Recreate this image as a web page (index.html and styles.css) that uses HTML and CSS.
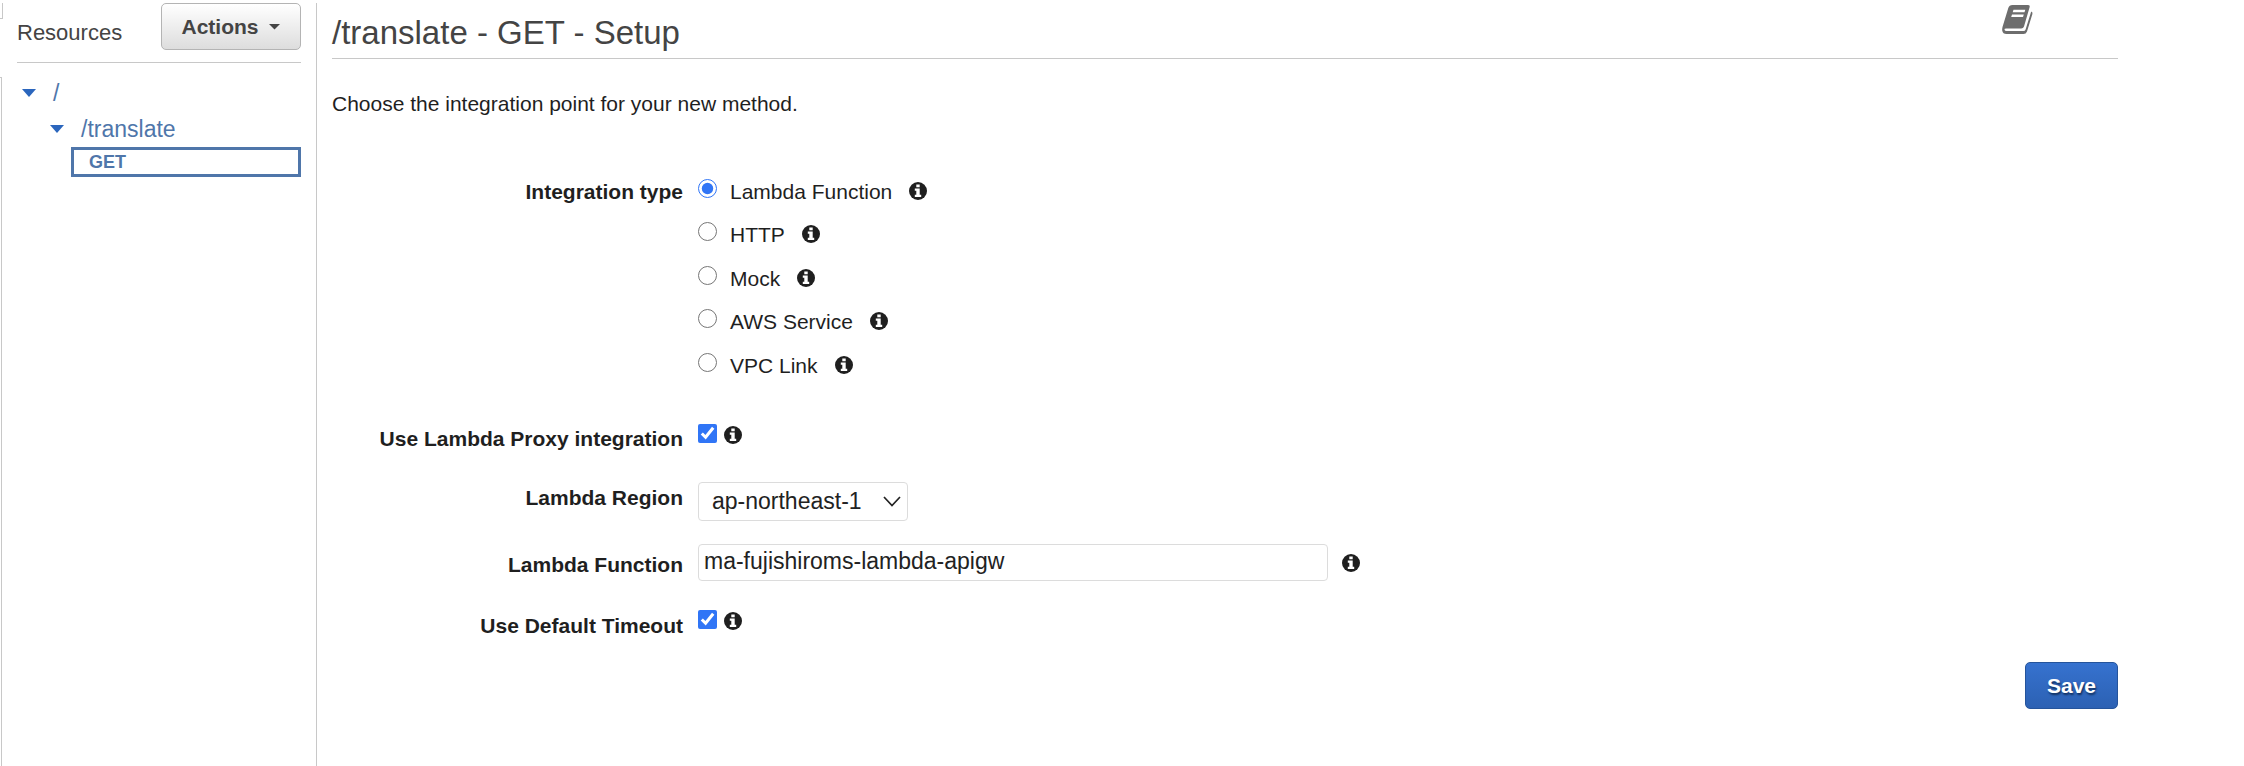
FILE: index.html
```html
<!DOCTYPE html>
<html lang="en">
<head>
<meta charset="utf-8">
<title>/translate - GET - Setup</title>
<link rel="stylesheet" href="styles.css">
</head>
<body>
<svg class="defs" aria-hidden="true">
  <symbol id="info" viewBox="0 0 18 18">
    <circle cx="9" cy="9" r="9" fill="#1f1f1f"/>
    <path fill="#fff" d="M7.3 2.5h3.400v2.800H7.300zM5.800 6.600h4.900v6.100h1.500v2.200H5.800v-2.200h1.500V8.800H5.800z"/>
  </symbol>
</svg>
<div class="app">
  <div class="rail"><div class="rail-top"></div><div class="rail-line"></div></div>
  <aside class="sidebar">
    <header class="sidebar-head">
      <h2>Resources</h2>
      <button class="btn-actions" type="button">Actions <span class="caret"></span></button>
    </header>
    <nav class="tree">
      <div class="node"><span class="caret"></span><a href="#root">/</a></div>
      <div class="node child"><span class="caret"></span><a href="#translate">/translate</a></div>
      <a class="method" href="#get">GET</a>
    </nav>
  </aside>
  <main class="main">
    <header class="main-head">
      <h1>/translate - GET - Setup</h1>
      <a class="docs" href="#docs" aria-label="Documentation">
        <svg width="32" height="30" viewBox="0 0 32 30">
          <path fill="#6d6d6d" fill-rule="evenodd" d="M10.5 0H26q2.200 0 1.600 2.200L22 21.500q-.6 2-2.800 2H4.200q-2 0-1.700 1.300.3 1.300 2 1.300H21.500q1.600 0 2.100-1.500L29.200 6.500q1.800.5 1.200 2.500L25 26.500Q24 29 21.500 29H4.500Q.8 29 .2 25.500 0 24 .5 22L6.300 3Q7.200 0 10.500 0zM11.500 4.800l-.8 2.400h11.800l.8-2.400zM10 9.500l-.8 2.400H21l.8-2.400z"/>
        </svg>
      </a>
    </header>
    <p class="intro">Choose the integration point for your new method.</p>
    <form class="form">
      <div class="row types" role="radiogroup" aria-labelledby="type-label">
        <span class="label" id="type-label">Integration type</span>
        <div class="options">
          <div class="option"><input type="radio" name="type" id="t1" checked><label for="t1">Lambda Function</label><svg class="info"><use href="#info"/></svg></div>
          <div class="option"><input type="radio" name="type" id="t2"><label for="t2">HTTP</label><svg class="info"><use href="#info"/></svg></div>
          <div class="option"><input type="radio" name="type" id="t3"><label for="t3">Mock</label><svg class="info"><use href="#info"/></svg></div>
          <div class="option"><input type="radio" name="type" id="t4"><label for="t4">AWS Service</label><svg class="info"><use href="#info"/></svg></div>
          <div class="option"><input type="radio" name="type" id="t5"><label for="t5">VPC Link</label><svg class="info"><use href="#info"/></svg></div>
        </div>
      </div>
      <div class="row proxy">
        <label class="label" for="proxy">Use Lambda Proxy integration</label>
        <div class="check"><input type="checkbox" id="proxy" checked><svg class="info"><use href="#info"/></svg></div>
      </div>
      <div class="row region">
        <label class="label" for="region">Lambda Region</label>
        <div class="select">
          <select id="region"><option>ap-northeast-1</option></select>
          <svg class="chevron" width="18" height="11" viewBox="0 0 18 11"><path d="M1 1l8 8.500L17 1" fill="none" stroke="#222" stroke-width="1.700"/></svg>
        </div>
      </div>
      <div class="row function">
        <label class="label" for="function">Lambda Function</label>
        <div class="field"><input type="text" id="function" value="ma-fujishiroms-lambda-apigw"><svg class="info"><use href="#info"/></svg></div>
      </div>
      <div class="row timeout">
        <label class="label" for="timeout">Use Default Timeout</label>
        <div class="check"><input type="checkbox" id="timeout" checked><svg class="info"><use href="#info"/></svg></div>
      </div>
      <div class="actions"><button class="btn-save" type="submit">Save</button></div>
    </form>
  </main>
</div>
</body>
</html>
```
FILE: styles.css
```css
* { box-sizing: border-box; }
body {
  margin: 0;
  background: #fff;
  color: #1f1f1f;
  font: 21px/24px "Liberation Sans", Arial, sans-serif;
}
h1, h2, p { margin: 0; font-weight: normal; }
a { text-decoration: none; }
input { margin: 0; accent-color: #3075f6; }
.defs { position: absolute; width: 0; height: 0; }
.app { display: flex; min-height: 100vh; padding-top: 3px; }

.rail { display: flex; flex-direction: column; gap: 58px; width: 3px; }
.rail-top { height: 16px; border-bottom: 1px solid #c8c8c8; }
.rail-top::before { content: ""; display: block; width: 2px; height: 100%; border-right: 1px solid #c8c8c8; }
.rail-line { flex: 1; width: 2px; border-right: 1px solid #c8c8c8; border-top: 1px solid #c8c8c8; }

.sidebar { width: 314px; padding: 0 15px 0 14px; border-right: 1px solid #c8c8c8; }
.sidebar-head {
  display: flex;
  align-items: flex-start;
  justify-content: space-between;
  height: 60px;
  border-bottom: 1px solid #c8c8c8;
}
h2 { padding-top: 18px; font-size: 22px; color: #444; }
.caret {
  width: 14px;
  height: 8px;
  background: #2b66bd;
  clip-path: polygon(0 0, 100% 0, 50% 100%);
}
.btn-actions {
  display: flex;
  align-items: center;
  justify-content: center;
  gap: 10px;
  width: 140px;
  height: 47px;
  border: 1px solid #b4b4b4;
  border-radius: 5px;
  background: linear-gradient(#fff, #ddd);
  color: #444;
  font: bold 21px/24px "Liberation Sans", Arial, sans-serif;
}
.btn-actions .caret { width: 12px; height: 6px; background: #444; }

.tree { padding-top: 12px; }
.node { display: flex; align-items: center; gap: 17px; height: 36px; padding-left: 5px; font-size: 23px; }
.node.child { padding-left: 33px; }
.node a { color: #4f76aa; }
.method {
  display: block;
  height: 30px;
  margin-left: 54px;
  padding-left: 15px;
  border: 3px solid #4f76aa;
  color: #4f76aa;
  font-size: 18px;
  line-height: 25px;
  font-weight: bold;
}

.main { flex: 1; margin-left: 15px; margin-right: 126px; }
.main-head {
  display: flex;
  justify-content: space-between;
  height: 56px;
  padding-right: 84px;
  border-bottom: 1px solid #c8c8c8;
}
h1 { padding-top: 11px; font-size: 33px; line-height: 38px; color: #444; }
.docs { padding-top: 2px; }
.docs svg { display: block; }
.intro { padding-top: 33px; }

.form { display: flex; flex-direction: column; padding-top: 60px; }
.row { display: flex; align-items: flex-start; gap: 15px; }
.label { width: 351px; padding-top: 4px; text-align: right; font-weight: bold; }
.options { display: flex; flex-direction: column; height: 217px; }
.option { display: flex; flex: 1; align-items: flex-start; }
.option input { width: 19px; height: 19px; margin-top: 3px; }
.option label { padding: 4px 17px 0 13px; }
.info { width: 18px; height: 18px; flex: none; }
.option .info { margin-top: 6px; }

.check { display: flex; align-items: flex-start; gap: 7px; }
.check input { width: 19px; height: 19px; }
.check .info { margin-top: 2px; }
.proxy { margin-top: 31px; }
.proxy .label { padding-top: 3px; }
.region { margin-top: 31px; }
.select { display: grid; align-items: center; width: 210px; }
.select select, .chevron { grid-area: 1 / 1; }
.chevron { justify-self: end; margin-right: 7px; pointer-events: none; }
select, input[type="text"] {
  border: 1px solid #dcdcdc;
  border-radius: 4px;
  background: #fff;
  color: #222;
  font: 23px/28px "Liberation Sans", Arial, sans-serif;
}
select { appearance: none; height: 39px; padding: 0 13px 2px; }
.function { margin-top: 23px; }
.function .label { padding-top: 9px; }
.field { display: flex; align-items: center; gap: 14px; }
input[type="text"] { width: 630px; height: 37px; padding: 0 5px 2px; }
.timeout { margin-top: 29px; }
.actions { display: flex; justify-content: flex-end; margin-top: 24px; }
.btn-save {
  width: 93px;
  height: 47px;
  border: 1px solid #25549b;
  border-radius: 5px;
  background: linear-gradient(#3672cf, #2c61b3);
  color: #fff;
  font: bold 21px/24px "Liberation Sans", Arial, sans-serif;
  text-shadow: 1px 2px 2px #12305f;
}
```
